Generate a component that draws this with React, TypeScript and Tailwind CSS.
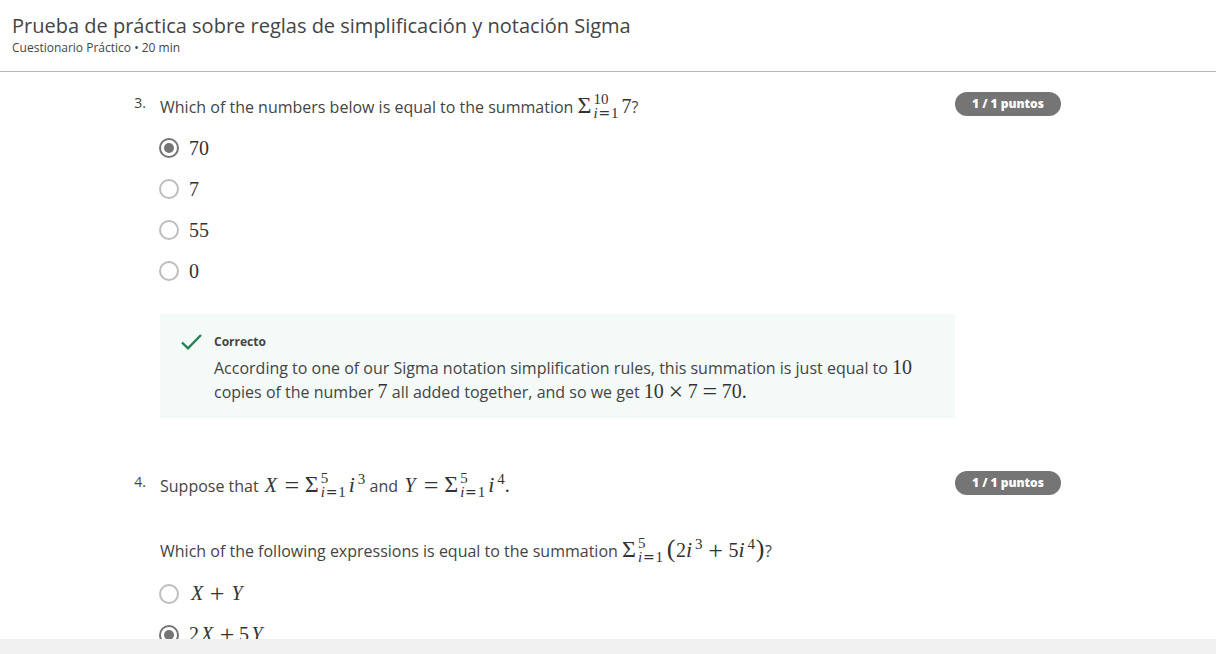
import { useState } from "react";
import type { ReactNode } from "react";

const mathFont = "font-['Liberation_Serif',serif] text-[20px] leading-none whitespace-nowrap text-[#333]";

function M({ children }: { children: ReactNode }) {
  return <span className={mathFont}>{children}</span>;
}

function Var({ children }: { children: ReactNode }) {
  return <i className="inline-block w-4 text-center">{children}</i>;
}

function Op({ children }: { children: ReactNode }) {
  return <span className="mx-1 inline-block w-4 text-center align-[-2px] text-[26px] leading-[20px]">{children}</span>;
}

function WideOp({ children }: { children: ReactNode }) {
  return <span className="mx-[5px] inline-block w-4 text-center align-[-2px] text-[26px] leading-[20px]">{children}</span>;
}

function Paren({ children }: { children: ReactNode }) {
  return <span className="inline-block w-2.5 text-center text-[26px] leading-[20px]">{children}</span>;
}

function Power({ exponent }: { exponent: string }) {
  return (
    <>
      <i className="mr-px inline-block w-2 text-[22px] leading-none">i</i>
      <span className="inline-block align-[8px] text-[15px] leading-none">{exponent}</span>
    </>
  );
}

function Sum({ upper }: { upper: string }) {
  return (
    <>
      <span className="inline-block w-4 text-[24px] leading-[20px]">Σ</span>
      <span className="mr-[3px] inline-block w-[25px] align-[-5px] text-[15px] leading-[14px]">
        <span className="block">{upper}</span>
        <span className="flex items-baseline justify-between">
          <i>i</i>
          <span className="font-['DejaVu_Sans',sans-serif] text-[14px]">=</span>
          <span>1</span>
        </span>
      </span>
    </>
  );
}

function Option({ group, checked, onSelect, children }: {
  group: string;
  checked: boolean;
  onSelect: () => void;
  children: ReactNode;
}) {
  return (
    <label className="-ml-px flex h-[41px] cursor-pointer items-center gap-2.5">
      <input
        type="radio"
        name={group}
        checked={checked}
        onChange={onSelect}
        className="m-0 size-5 shrink-0 appearance-none rounded-full border-2 border-[#bdbdbd] bg-white bg-clip-content p-[3px] checked:border-[#757575] checked:bg-[#757575]"
      />
      <M>{children}</M>
    </label>
  );
}

function Question({ number, title, options, initial, children }: {
  number: number;
  title: ReactNode;
  options: ReactNode[];
  initial: number;
  children?: ReactNode;
}) {
  const [selected, setSelected] = useState(initial);
  return (
    <section className="flex items-start">
      <span className="w-[15px] shrink-0 pt-px text-right text-[14px] leading-5">{number}.</span>
      <div className="ml-3.5 min-w-0 flex-1">
        <fieldset>
          <legend className="text-[16px] leading-[26px]">{title}</legend>
          <div className="pt-[7px]">
            {options.map((option, index) => (
              <Option
                key={index}
                group={`question-${number}`}
                checked={selected === index}
                onSelect={() => setSelected(index)}
              >
                {option}
              </Option>
            ))}
          </div>
        </fieldset>
        {children}
      </div>
      <span className="w-[106px] shrink-0 rounded-full bg-[#757575] text-center text-[12px] leading-6 font-extrabold text-white">
        1 / 1 puntos
      </span>
    </section>
  );
}

export default function App() {
  return (
    <div className="flex h-screen flex-col bg-white font-['Open_Sans',sans-serif] text-[#444]">
      <header className="shrink-0 border-b border-[#b5b5b5] px-3 pt-3 pb-4">
        <h1 className="text-[20px] leading-7">Prueba de práctica sobre reglas de simplificación y notación Sigma</h1>
        <p className="text-[12px] leading-[15px]">Cuestionario Práctico • 20 min</p>
      </header>

      <main className="min-h-0 flex-1 overflow-hidden pt-5 pr-6">
        <div className="mx-auto flex max-w-[930px] flex-col gap-[53px]">
          <Question
            number={3}
            initial={0}
            title={
              <>
                Which of the numbers below is equal to the summation <M><Sum upper="10" />7</M>?
              </>
            }
            options={["70", "7", "55", "0"]}
          >
            <div className="mt-[23px] flex items-start gap-3 bg-[#f3faf8] pt-4 pr-8 pb-3.5 pl-5">
              <svg viewBox="0 0 22 18" className="mt-[3px] h-[18px] w-[22px] shrink-0" fill="none" stroke="#1f8354" strokeWidth="2.4" aria-hidden="true">
                <path d="M2 9.5 8 15.3 21 2" />
              </svg>
              <div>
                <p className="mb-0.5 text-[12px] leading-6 font-bold">Correcto</p>
                <p className="text-[16px] leading-6">
                  According to one of our Sigma notation simplification rules, this summation is just equal to <M>10</M>{" "}
                  copies of the number <M>7</M> all added together, and so we get{" "}
                  <M>10<Op>×</Op>7<Op>=</Op>70.</M>
                </p>
              </div>
            </div>
          </Question>

          <Question
            number={4}
            initial={1}
            title={
              <>
                <span className="block">
                  Suppose that <M><Var>X</Var><WideOp>=</WideOp><Sum upper="5" /><Power exponent="3" /></M> and{" "}
                  <M><Var>Y</Var><WideOp>=</WideOp><Sum upper="5" /><Power exponent="4" />.</M>
                </span>
                <span className="mt-[37px] block pb-0.5">
                  Which of the following expressions is equal to the summation{" "}
                  <M>
                    <Sum upper="5" /><Paren>(</Paren>2<Power exponent="3" /><WideOp>+</WideOp>5<Power exponent="4" /><Paren>)</Paren>
                  </M>?
                </span>
              </>
            }
            options={[
              <><Var>X</Var><Op>+</Op><Var>Y</Var></>,
              <>2<Var>X</Var><Op>+</Op>5<Var>Y</Var></>,
            ]}
          />
        </div>
      </main>

      <footer className="h-[15px] shrink-0 bg-[#f0f0f0]" />
    </div>
  );
}
